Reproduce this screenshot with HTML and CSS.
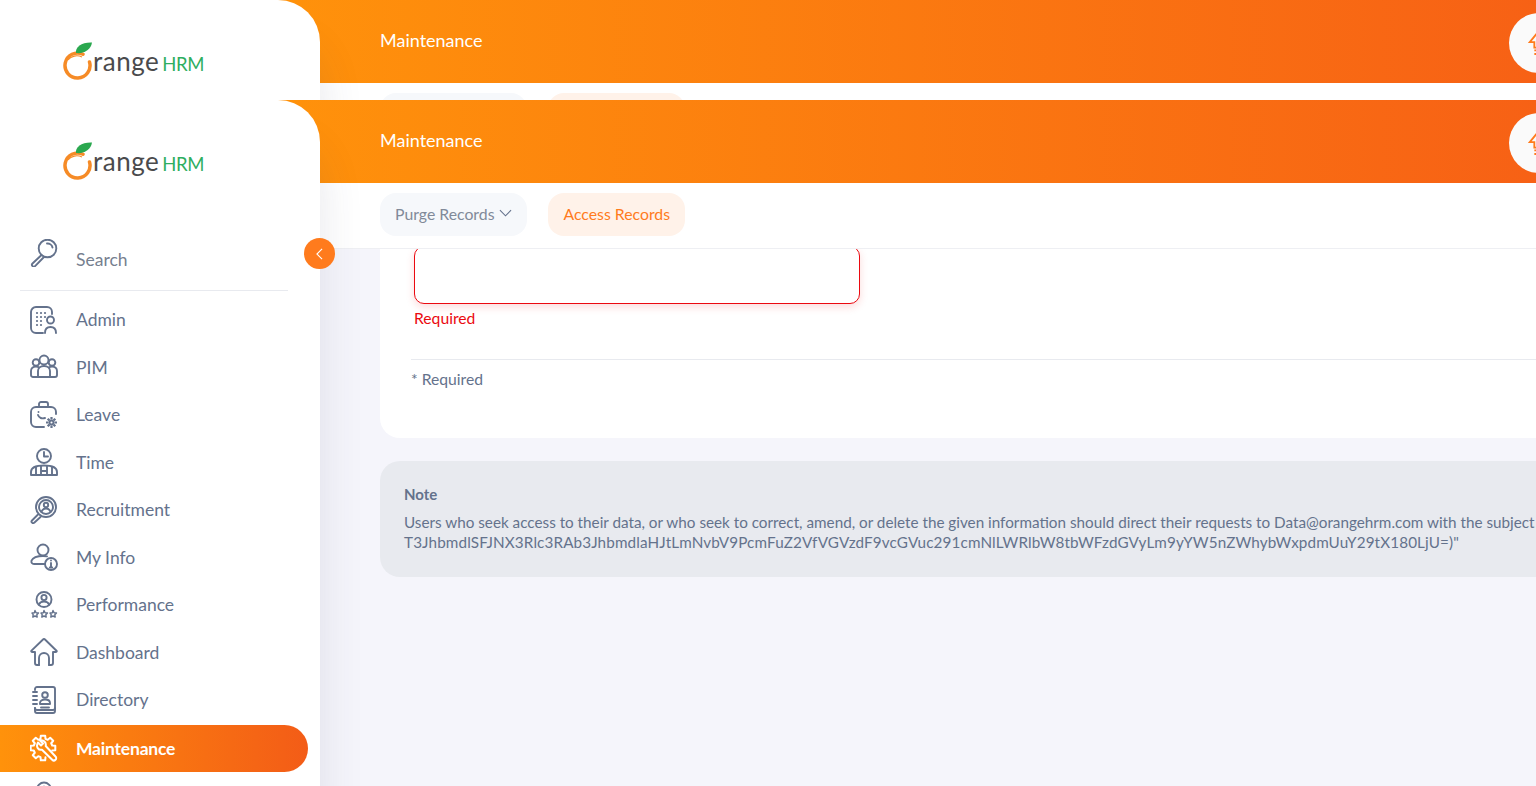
FILE: index.html
```html
<!DOCTYPE html>
<html>
<head>
<meta charset="utf-8">
<title>Maintenance</title>
<link rel="stylesheet" href="styles.css">
</head>
<body>

<!-- the page behind: only its top strip shows -->
<div class="layer">
  <aside class="side">
    <div class="logo">
      <svg class="logo-o" viewBox="0 0 30 38"><path d="M20 12.300A12.500 12.500 0 1 0 26.500 20" class="o-ring"/><path d="M5 18c3-4 9-5.500 14-3" class="o-ring-thin"/><path d="M13 11C12 5 19 0 29 .5 28 7 22 12 13 11z" class="o-leaf"/></svg>
      <span class="logo-word">range</span><span class="logo-hrm">HRM</span>
    </div>
  </aside>
  <main class="main">
    <header class="topbar">
      <span class="topbar-title">Maintenance</span>
      <span class="upgrade"><svg viewBox="0 0 24 28"><path d="M12 2 3 13h5v6h8v-6h5z" class="up-arrow"/><path d="M8 22h8M8 26h8" class="up-arrow"/></svg></span>
    </header>
    <nav class="tabs">
      <span class="tab">Purge Records <svg class="chev" viewBox="0 0 14 8"><path d="M1 1l6 6 6-6"/></svg></span>
      <span class="tab tab-on">Access Records</span>
    </nav>
  </main>
</div>

<!-- the page in front -->
<div class="layer layer-front">
  <aside class="side">
    <div class="logo">
      <svg class="logo-o" viewBox="0 0 30 38"><path d="M20 12.300A12.500 12.500 0 1 0 26.500 20" class="o-ring"/><path d="M5 18c3-4 9-5.500 14-3" class="o-ring-thin"/><path d="M13 11C12 5 19 0 29 .5 28 7 22 12 13 11z" class="o-leaf"/></svg>
      <span class="logo-word">range</span><span class="logo-hrm">HRM</span>
    </div>

    <div class="search">
      <svg class="ico" viewBox="0 0 28 28"><circle cx="17.500" cy="9.500" r="8.800"/><path d="M11.500 16 2.500 24.500a1.800 1.800 0 0 0 2.600 2.600L13.500 18.500"/><path d="M17 4.500c2.500-.3 5 1.500 5.500 4"/></svg>
      <span class="search-label">Search</span>
    </div>

    <ul class="menu">
      <li class="item"><svg class="ico" viewBox="0 0 28 28"><path d="M13 27H6a5 5 0 0 1-5-5V6a5 5 0 0 1 5-5h11a5 5 0 0 1 5 5v2"/><path class="dots" d="M7 7h.01M11 7h.01M15 7h.01M7 11h.01M11 11h.01M15 11h.01M7 15h.01M11 15h.01M7 19h.01M11 19h.01"/><circle cx="20.500" cy="14" r="3.500"/><path d="M15 27c0-4 2.500-6 5.500-6s5.500 2 5.500 6"/></svg><span>Admin</span></li>
      <li class="item"><svg class="ico" viewBox="0 0 28 28"><circle cx="14" cy="7" r="4.500"/><circle cx="6" cy="9.500" r="3.300"/><circle cx="22" cy="9.500" r="3.300"/><path d="M8 24v-6c0-3 2.500-5 6-5s6 2 6 5v6z"/><path d="M8 24H3a2 2 0 0 1-2-2v-4c0-2.500 2-4.500 5-4.500 1 0 2 .2 2.800 .7M20 24h5a2 2 0 0 0 2-2v-4c0-2.500-2-4.500-5-4.500-1 0-2 .2-2.800 .7"/></svg><span>PIM</span></li>
      <li class="item"><svg class="ico" viewBox="0 0 28 28"><path d="M9 4.500V3a2 2 0 0 1 2-2h5a2 2 0 0 1 2 2v1.500"/><path d="M14 26H6a5 5 0 0 1-5-5V11a5 5 0 0 1 5-5h15a5 5 0 0 1 5 5v2"/><path d="M8 14c1 3 4 4 7 3M8.500 11h.01"/><circle cx="21.500" cy="21.500" r="2"/><path class="cog" d="M21.500 16v2.500M21.500 24.500V27M16 21.500h2.500M24.500 21.500H27M17.700 17.700l1.700 1.700M23.600 23.600l1.700 1.700M25.300 17.700l-1.700 1.700M19.400 23.600l-1.700 1.700"/></svg><span>Leave</span></li>
      <li class="item"><svg class="ico" viewBox="0 0 28 28"><circle cx="14" cy="8" r="7"/><path d="M14 4v4.500h4"/><path d="M1 27v-3c0-4 4-6.500 13-6.500S27 20 27 24v3z"/><path d="M6 27v-8M11 27v-9M17 27v-9M22 27v-8M11 23h6"/></svg><span>Time</span></li>
      <li class="item"><svg class="ico" viewBox="0 0 28 28"><circle cx="16" cy="11" r="10"/><circle cx="16" cy="11" r="7"/><circle cx="16" cy="9" r="2.200"/><path d="M11.500 15.500c1-2 2.500-3 4.500-3s3.500 1 4.500 3"/><path d="M8 18.500 2 24.500a1.500 1.500 0 0 0 2.200 2.200L10.500 21"/></svg><span>Recruitment</span></li>
      <li class="item"><svg class="ico" viewBox="0 0 28 28"><circle cx="13" cy="7" r="5.500"/><path d="M15 21H4c-2 0-3-1.500-2.500-3.300C3 14.500 6.500 13 13 13c1.500 0 3 .1 4 .4"/><circle cx="21" cy="21" r="6"/><path d="M21 20v4M21 17.500v.01M19.800 24.500h2.400"/></svg><span>My Info</span></li>
      <li class="item"><svg class="ico" viewBox="0 0 28 28"><circle cx="14" cy="8.500" r="7.500"/><circle cx="14" cy="6.500" r="2.600"/><path d="M9 13.500c.8-2 2.700-3 5-3s4.200 1 5 3"/><path class="star" d="M5 19.500l1.100 2.200 2.400.3-1.700 1.700.4 2.400-2.200-1.100-2.200 1.100.4-2.400L2 22l2.400-.3zM14 19.500l1.100 2.200 2.400.3-1.700 1.700.4 2.400-2.200-1.100-2.200 1.100.4-2.400L11 22l2.400-.3zM23 19.500l1.100 2.200 2.400.3-1.700 1.700.4 2.400-2.200-1.100-2.200 1.100.4-2.400L20 22l2.400-.3z"/></svg><span>Performance</span></li>
      <li class="item"><svg class="ico" viewBox="0 0 28 28"><path d="M9 27H7a2 2 0 0 1-2-2V14H2c-.8 0-1-.8-.5-1.300L13 1.500c.6-.6 1.400-.6 2 0l11.500 11.200c.5 .5 .3 1.300-.5 1.300h-3v11a2 2 0 0 1-2 2h-2"/><path d="M9 27v-7a5 5 0 0 1 10 0v7"/></svg><span>Dashboard</span></li>
      <li class="item"><svg class="ico" viewBox="0 0 28 28"><path d="M5 4V3a2 2 0 0 1 2-2h16a2 2 0 0 1 2 2v19a2 2 0 0 1-2 2H7a2 2 0 0 1-2-2"/><path d="M25 22v3a2 2 0 0 1-2 2H7a2 2 0 0 1-2-2v-3"/><path d="M3 6h4M3 10h4M3 14h4M3 18h4"/><circle cx="15" cy="9" r="2.800"/><path d="M10 18v-1c0-2 2-3.500 5-3.500s5 1.500 5 3.500v1zM11 21.500h8"/></svg><span>Directory</span></li>
      <li class="item item-on"><svg class="ico" viewBox="0 0 28 28"><path d="M15.500 23.200 15.200 26.300H10.800L10.500 23.200 8.250 22.200 5.800 24.200 2.800 21.200 4.800 18.750 3.800 16.500 .7 16.200V11.800L3.800 11.500 4.800 9.250 2.800 6.800 5.800 3.760 8.250 5.800 10.500 4.800 10.800 1.700H15.200L15.500 4.800 17.750 5.800 20.200 3.760 23.200 6.800 21.200 9.250 22.200 11.500 25.300 11.800V16.200L22.200 16.500"/><path d="M8 8.500 11 11.500 13 9.500 10 6.500C13.500 5.500 16.500 8.500 15.700 12L25.500 22.500a2.300 2.300 0 0 1-3.300 3.300L12 15.700C8.500 16.500 5.500 13 8 8.500z"/></svg><span>Maintenance</span></li>
      <li class="item"><svg class="ico" viewBox="0 0 28 28"><circle cx="14" cy="8.500" r="7"/><path d="M14 5.500v.01M14 8v5"/></svg></li>
    </ul>
  </aside>

  <main class="main">
    <header class="topbar">
      <span class="topbar-title">Maintenance</span>
      <span class="upgrade"><svg viewBox="0 0 24 28"><path d="M12 2 3 13h5v6h8v-6h5z" class="up-arrow"/><path d="M8 22h8M8 26h8" class="up-arrow"/></svg></span>
    </header>
    <nav class="tabs">
      <span class="tab">Purge Records <svg class="chev" viewBox="0 0 14 8"><path d="M1 1l6 6 6-6"/></svg></span>
      <span class="tab tab-on">Access Records</span>
    </nav>

    <div class="content">
      <div class="card">
        <div class="field-box"></div>
        <div class="field-error">Required</div>
        <div class="card-foot">* Required</div>
      </div>
      <div class="note">
        <div class="note-head">Note</div>
        <div class="note-text">Users who seek access to their data, or who seek to correct, amend, or delete the given information should direct their requests to Data@orangehrm.com with the subject<br><span class="note-code">T3JhbmdlSFJNX3Rlc3RAb3JhbmdlaHJtLmNvbV9PcmFuZ2VfVGVzdF9vcGVuc291cmNlLWRlbW8tbWFzdGVyLm9yYW5nZWhybWxpdmUuY29tX180LjU=)"</span></div>
      </div>
    </div>
  </main>

  <button class="toggle"><svg viewBox="0 0 8 14"><path d="M7 1 1 7l6 6"/></svg></button>
</div>

</body>
</html>
```

FILE: styles.css
```css
html, body {
  margin: 0;
  padding: 0;
  height: 100%;
  overflow: hidden;
  background: #ffffff;
  font-family: "Lato", "Noto Sans", sans-serif;
  color: #64728c;
}

.layer {
  display: flex;
  height: 786px;
  overflow: hidden;
  isolation: isolate;
}

.layer-front {
  position: absolute;
  z-index: 1;
  top: 100px;
  left: 0;
  right: 0;
  height: 686px;
  background: #f5f5fb;
}

/* sidebar */
.side {
  position: relative;
  z-index: 2;
  flex: 0 0 320px;
  box-sizing: border-box;
  padding-top: 43px;
  background: #ffffff;
  border-top-right-radius: 42px;
  box-shadow: 0 45px 45px rgba(60, 60, 90, .12);
}

.logo {
  display: flex;
  align-items: baseline;
  height: 39px;
  padding-left: 63px;
}

.logo-o {
  width: 30px;
  height: 38px;
  align-self: flex-start;
  margin-top: -1px;
}

.o-ring {
  fill: none;
  stroke: #f68b26;
  stroke-width: 3.500;
  stroke-linecap: round;
}

.o-ring-thin {
  fill: none;
  stroke: #f68b26;
  stroke-width: 1.200;
}

.o-leaf {
  fill: #2aa84f;
}

.logo-word {
  font-size: 26px;
  line-height: 36px;
  color: #4a4a4c;
  letter-spacing: .5px;
}

.logo-hrm {
  margin-left: 3px;
  font-size: 18.500px;
  color: #2fae5f;
  letter-spacing: -.3px;
}

.search {
  display: flex;
  align-items: flex-start;
  gap: 18px;
  box-sizing: border-box;
  height: 53px;
  margin: 55px 32px 0 30px;
  padding-top: 2px;
}

.search-label {
  margin-top: 11px;
  font-size: 17.500px;
  line-height: 20px;
  color: #76808f;
}

.menu {
  list-style: none;
  margin: 0;
  padding: 5px 0 0;
}

.menu:before {
  content: "";
  display: block;
  height: 1px;
  margin: -5px 32px 5px 20px;
  background: #e8eaef;
}

.item {
  display: flex;
  align-items: center;
  gap: 18px;
  height: 47.500px;
  width: 308px;
  box-sizing: border-box;
  padding-left: 30px;
  font-size: 17.500px;
  color: #64728c;
}

.item-on {
  height: 47px;
  margin-top: 1px;
  color: #ffffff;
  font-weight: 700;
  letter-spacing: -.2px;
  background: linear-gradient(90deg, #ff920b, #f35c17);
  border-radius: 0 24px 24px 0;
}

.ico {
  flex: 0 0 28px;
  width: 28px;
  height: 28px;
  fill: none;
  stroke: #64728c;
  stroke-width: 1.900;
  stroke-linecap: round;
  stroke-linejoin: round;
}

.item-on .ico {
  stroke: #ffffff;
  stroke-width: 2;
}

.dots {
  stroke-width: 2.200;
}

.cog {
  stroke-width: 2.200;
  stroke-linecap: butt;
}

.star {
  stroke-width: 1.400;
}

/* right side */
.main {
  flex: 1;
  min-width: 0;
  margin-left: -42px;
  display: flex;
  flex-direction: column;
}

.topbar {
  flex: 0 0 83px;
  display: flex;
  align-items: center;
  justify-content: space-between;
  padding-left: 102px;
  background: linear-gradient(90deg, #ff920b, #f76115);
}

.topbar-title {
  margin-bottom: 4px;
  font-size: 18px;
  color: #ffffff;
}

.upgrade {
  flex: 0 0 60px;
  width: 60px;
  height: 60px;
  margin-right: -33px;
  margin-top: 3px;
  display: flex;
  align-items: center;
  padding-left: 18px;
  box-sizing: border-box;
  border-radius: 50%;
  background: #fafafa;
}

.upgrade svg {
  width: 22px;
  height: 26px;
  flex: none;
}

.up-arrow {
  fill: none;
  stroke: #ff7b1d;
  stroke-width: 2;
}

.tabs {
  position: relative;
  z-index: 1;
  flex: 0 0 66px;
  box-sizing: border-box;
  display: flex;
  gap: 21px;
  align-items: flex-start;
  padding: 10px 0 0 102px;
  background: #ffffff;
  border-bottom: 1px solid #eeeff3;
}

.tab {
  display: flex;
  align-items: center;
  gap: 5px;
  box-sizing: border-box;
  height: 43px;
  padding: 0 15px 3px;
  border-radius: 16px;
  font-size: 15.800px;
  color: #818a99;
  background: #f6f8fb;
}

.tab-on {
  color: #ff7b1d;
  background: #fff2e9;
}

.chev {
  width: 13px;
  height: 8px;
  fill: none;
  stroke: #64728c;
  stroke-width: 1.200;
}

.content {
  flex: 1;
  padding-left: 102px;
}

.card {
  box-sizing: border-box;
  height: 192px;
  padding-left: 34px;
  background: #ffffff;
  border-radius: 0 0 0 20px;
}

.field-box {
  box-sizing: border-box;
  width: 446px;
  height: 58px;
  margin-top: -3px;
  border: 1px solid #eb0910;
  border-radius: 10px;
  background: #ffffff;
  box-shadow: 0 3px 8px rgba(235, 9, 16, .15);
}

.field-error {
  margin-top: 5px;
  font-size: 15.700px;
  line-height: 18px;
  color: #eb0910;
}

.card-foot {
  margin: 32px 0 0 -3px;
  padding-top: 10px;
  border-top: 1px solid #e8eaef;
  font-size: 15.700px;
  line-height: 18px;
}

.note {
  box-sizing: border-box;
  height: 116px;
  margin-top: 23px;
  padding: 24px 0 0 24px;
  background: #e8eaef;
  border-radius: 20px 0 0 20px;
  white-space: nowrap;
}

.note-head {
  font-size: 15px;
  font-weight: 700;
  line-height: 18px;
}

.note-text {
  margin-top: 9px;
  font-size: 15.250px;
  line-height: 20px;
}

.note-code {
  letter-spacing: .12px;
}

.toggle {
  position: absolute;
  z-index: 3;
  left: 304px;
  top: 138px;
  width: 31px;
  height: 31px;
  padding: 0;
  border: 0;
  border-radius: 50%;
  background: #ff7b1d;
  display: flex;
  align-items: center;
  justify-content: center;
}

.toggle svg {
  width: 7px;
  height: 12px;
  fill: none;
  stroke: #ffffff;
  stroke-width: 1.300;
}
```
